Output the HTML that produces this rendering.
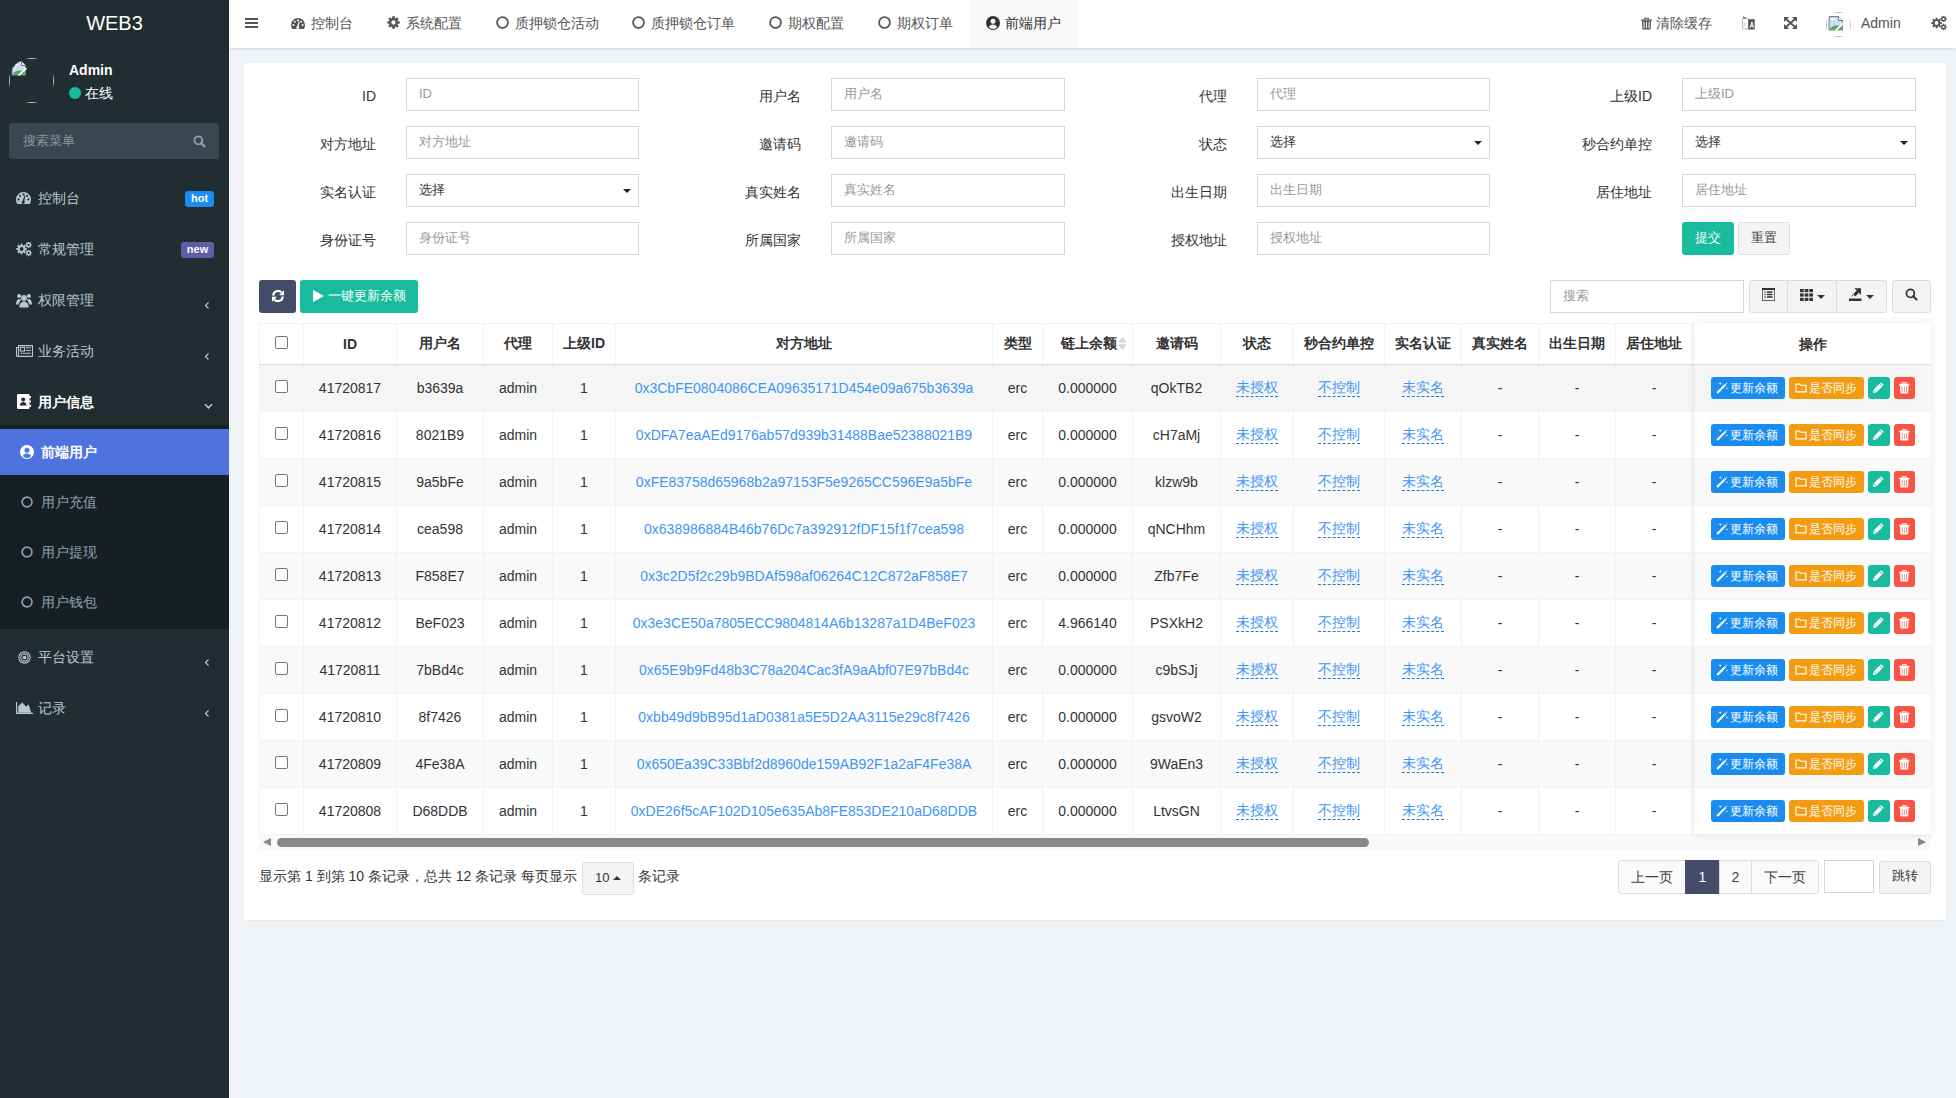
<!DOCTYPE html><html><head><meta charset="utf-8"><title>WEB3</title><style>
*{box-sizing:border-box;margin:0;padding:0}
html,body{width:1956px;height:1098px;overflow:hidden}
body{background:#f1f4f6;font-family:"Liberation Sans",sans-serif;font-size:14px;color:#333;position:relative}
svg{display:block}
#side{position:absolute;left:0;top:0;width:229px;height:1098px;background:#222d32}
.logo{position:absolute;left:0;top:0;width:229px;height:48px;line-height:46px;text-align:center;color:#fff;font-size:20px}
.avatar{position:absolute;left:9px;top:58px;width:45px;height:45px;border-radius:50%;overflow:hidden}
.avatar .sq,.havatar .sq{position:absolute;left:0;top:0;right:0;bottom:0;border:1px solid #c0c0c0}
.brokenimg{position:absolute;left:2px;top:2px}
.uname{position:absolute;left:69px;top:61px;color:#fff;font-weight:bold;font-size:14px;line-height:18px}
.online{position:absolute;left:69px;top:84px;color:#fff;font-size:14px;line-height:18px}
.online .dot{display:inline-block;width:12px;height:12px;border-radius:50%;background:#18bc9c;vertical-align:-1px;margin-right:4px}
.sbox{position:absolute;left:9px;top:123px;width:210px;height:36px;background:#374850;border-radius:3px}
.sbox .ph{position:absolute;left:14px;top:9px;color:#8c989e;font-size:13px;line-height:18px}
.sicon{position:absolute;left:184px;top:12px;color:#9aa5aa}
.mi{position:absolute;left:0;width:229px;height:24px;line-height:24px;color:#b8c7ce;font-size:14px}
.mi .micon{position:absolute;left:16px;top:6px}
.mi .mt{position:absolute;left:38px;top:0}
.mi.open{color:#fff;font-weight:bold}
.mi.sub{color:#8aa4af}
.mi.sub .subicon{position:absolute;left:21px;top:6px}
.mi.sub .mt{left:41px}
.mi.sub.act{color:#fff;font-weight:bold}
.mi.sub.act .subicon{left:20px;top:5px}
.badge{position:absolute;left:185px;width:29px;height:16px;border-radius:3px;color:#fff;font-size:11px;font-weight:bold;text-align:center;line-height:14px}
.badge.hot{background:#1d8cf0}
.badge.new{background:#605ca8;left:181px;width:33px}
.chev{position:absolute;left:204px;color:#b8c7ce}
.tree{position:absolute;left:0;top:425px;width:229px;height:204px;background:#181f22}
.active{position:absolute;left:0;top:429px;width:229px;height:46px;background:#4e73df}
#hdr{position:absolute;left:229px;top:0;width:1727px;height:48px;background:#fff;box-shadow:0 1px 3px rgba(0,0,0,.13)}
.hamb{position:absolute;left:16px;top:18px;color:#555}
.tabact{position:absolute;left:740px;top:0;width:109px;height:48px;background:#f9f9f9}
.tab{position:absolute;top:0;height:48px;line-height:46px;color:#555;font-size:14px;white-space:nowrap}
.tab .ticon{position:absolute;left:0;top:16px}
.tab span{position:absolute;left:19px;top:0}
.tab.act{color:#333}
.hr{position:absolute;top:0;height:48px;line-height:46px;color:#555;white-space:nowrap}
.hr .ticon{position:absolute;left:0;top:17px}
.hr span{position:absolute;left:15px}
.hicon{position:absolute;top:16px;color:#555}
.havatar{position:absolute;left:1597px;top:12px;width:25px;height:25px;border-radius:50%;overflow:hidden}
.hbroken{position:absolute;left:2px;top:3px}
.hadmin{position:absolute;left:1632px;top:0;line-height:46px;color:#555;font-size:14px}
#panel{position:absolute;left:244px;top:63px;width:1702px;height:857px;background:#fff;border-radius:3px;box-shadow:0 1px 1px rgba(0,0,0,.05)}
.flab{position:absolute;margin-right:-1px;height:33px;line-height:36px;color:#333;font-size:14px;white-space:nowrap}
.finp{position:absolute;width:233px;height:33px;border:1px solid #d2d6de;background:#fff}
.finp .ph{position:absolute;left:12px;top:0;line-height:30px;color:#999;font-size:13px}
.finp.sel span{position:absolute;left:12px;top:0;line-height:29px;color:#333;font-size:13px}
.caret{position:absolute;right:7px;top:14px;width:0;height:0;border-left:4px solid transparent;border-right:4px solid transparent;border-top:4px solid #222}
.btn{position:absolute;padding-bottom:2px;border-radius:3px;color:#fff;font-size:13px;text-align:center;line-height:32px;display:flex;align-items:center;justify-content:center;white-space:nowrap}
.bsucc{background:#18bc9c;color:#fff}
.bprim{background:#444c69;color:#fff}
.bdef{background:#f4f4f4;border:1px solid #ddd;color:#444}
.binfo{background:#1a8cf0}
.bwarn{background:#f39c12}
.bdang{background:#f75444}
.playicon{color:#fff}
.sinput{position:absolute;width:194px;height:33px;border:1px solid #d2d6de}
.sinput .ph{position:absolute;left:12px;top:0;line-height:30px;color:#999;font-size:13px}
.bgroup{position:absolute;width:137px;height:33px;border:1px solid #ddd;border-radius:3px;background:#f4f4f4;display:flex}
.gb{position:absolute;top:217px;height:33px;border:1px solid #ddd;background:#f4f4f4;display:flex;align-items:center;justify-content:center;color:#333;padding-bottom:3px}
.caret2{display:inline-block;width:0;height:0;border-left:4px solid transparent;border-right:4px solid transparent;border-top:4px solid #333;margin-left:4px;margin-top:4px}
.gb .gicon{margin-top:-1px}
.tblwrap{position:absolute;left:15px;top:260px;width:1672px;height:527px;overflow:hidden}
.tbl{position:absolute;left:0;top:0;border-collapse:collapse;table-layout:fixed;width:1777px}
.tbl th,.tbl td{border:1px solid #f2f2f2;text-align:center;white-space:nowrap;overflow:hidden}
.tbl th{height:41px;font-weight:bold;font-size:14px;color:#333;border-bottom:1px solid #ddd;position:relative}
.tbl td{height:47px;font-size:14px;color:#333}
.tbl tr.odd td{background:#f9f9f9}
.tbl tr.hov td{background:#f5f5f5}
.tbl a{color:#3f95f6}
.tbl u{color:#3f95f6;text-decoration:none;border-bottom:1px dashed #1c80c4;padding-bottom:1px}
.cb{display:inline-block;width:13px;height:13px;border:1px solid #767676;border-radius:2px;background:#fff;vertical-align:middle;position:relative;top:-3px}
.sort{display:inline-block;vertical-align:middle;position:relative;left:7px;top:-1px}
.fixcol{position:absolute;left:1451px;top:260px;width:236px;height:512px;background:#fff;box-shadow:0 0 8px rgba(0,0,0,.09)}
.fh{height:42px;line-height:41px;text-align:center;font-weight:bold;border-bottom:1px solid #ddd;border-top:1px solid #fff}
.fr{height:47px;display:flex;align-items:center;padding-left:16px;padding-top:0;border-bottom:1px solid #f2f2f2}
.fr.odd{background:#f9f9f9}
.fr.hov{background:#f5f5f5}
.ob{display:inline-flex;align-items:center;justify-content:center;height:22px;border-radius:3px;color:#fff;font-size:12px;margin-right:4px;padding:0;white-space:nowrap}
.ob .oicon{margin-right:2px;margin-left:-2px}
.ob.sq{width:22px;justify-content:center;padding:0}
.sbar{position:absolute;left:0;top:512px;width:1672px;height:15px;background:#f9f9f9}
.sbar .thumb{position:absolute;left:18px;top:3px;width:1092px;height:9px;border-radius:5px;background:#888}
.sbar .arl{position:absolute;left:4px;top:3px;width:0;height:0;border-top:4px solid transparent;border-bottom:4px solid transparent;border-right:8px solid #888}
.sbar .arr{position:absolute;right:5px;top:3px;width:0;height:0;border-top:4px solid transparent;border-bottom:4px solid transparent;border-left:8px solid #888}
.finfo{position:absolute;left:15px;top:799px;height:33px;line-height:29px;font-size:14px;color:#333;white-space:nowrap}
.psize{position:absolute;left:338px;top:799px;width:52px;font-size:13px;height:33px;border:1px solid #ddd;border-radius:3px;background:#f4f4f4;text-align:center;line-height:29px}
.caretup{display:inline-block;width:0;height:0;border-left:4px solid transparent;border-right:4px solid transparent;border-bottom:4px solid #333;vertical-align:2px}
.pager{position:absolute;left:1374px;top:797px;height:34px;display:flex;border-radius:3px}
.pager span{height:34px;border:1px solid #ddd;border-right:0;background:#fafafa;line-height:32px;text-align:center;color:#444;font-size:14px}
.pager span:first-child{border-radius:3px 0 0 3px}
.pager span:last-child{border-radius:0 3px 3px 0}
.pager .pact{background:#444c69;border-color:#444c69;color:#fff}
.jinput{position:absolute;left:1580px;top:797px;width:50px;height:33px;border:1px solid #d2d6de}
.jbtn{left:1635px;top:798px;width:52px;height:33px;color:#333;padding-bottom:3px}

</style></head><body>
<div id="side">
<div class="logo">WEB3</div>
<div class="avatar"><i class="sq"></i><svg class="brokenimg" width="16" height="16" viewBox="0 0 16 16" fill="currentColor"><path d="M1 1.5h9.5l4 4V15H1z" fill="#c9dcf6" stroke="#7a7a7a" stroke-width="1"/><ellipse cx="5" cy="4.6" rx="2" ry="1" fill="#fff"/><path d="M1.5 14.5C4 10 8.5 9.5 14 11.5v3H1.5z" fill="#4caf50"/><path d="M10.5 1.5v4h4" fill="#fff" stroke="#7a7a7a" stroke-width="1"/><path d="M7.5 15.5L15.5 8" stroke="#fff" stroke-width="1.6"/></svg></div>
<div class="uname">Admin</div><div class="online"><span class="dot"></span>在线</div>
<div class="sbox"><span class="ph">搜索菜单</span><svg class="sicon" width="13" height="13" viewBox="0 0 14 14" fill="currentColor"><circle cx="5.8" cy="5.8" r="4.3" fill="none" stroke="currentColor" stroke-width="1.9"/><path d="M8.8 8.8l3.6 3.6" stroke="currentColor" stroke-width="2.2" stroke-linecap="round"/></svg></div>
<div class="mi" style="top:186px"><svg class="micon" style="" width="15" height="12" viewBox="0 0 15 12" fill="currentColor"><path d="M7.5 0A7.5 7.5 0 0 0 0 7.5c0 1.6.5 3.1 1.3 4.4h12.4A7.5 7.5 0 0 0 15 7.5 7.5 7.5 0 0 0 7.5 0z"/><g fill="#222d32"><circle cx="2.6" cy="7.4" r="1.05"/><circle cx="4.1" cy="3.9" r="1.05"/><circle cx="7.5" cy="2.4" r="1.05"/><circle cx="10.9" cy="3.9" r="1.05"/><circle cx="12.4" cy="7.4" r="1.05"/><path d="M8.3 3.6l.9.3-.9 5.4a1.5 1.5 0 1 1-1.6-.4z"/></g></svg><span class="mt">控制台</span></div>
<span class="badge hot" style="top:191px">hot</span>
<div class="mi" style="top:237px"><svg class="micon" style="top:5px" width="16" height="16" viewBox="0 0 16 16" fill="currentColor"><path fill-rule="evenodd" d="M9.37 6.00L10.80 5.97L10.80 8.03L9.37 8.00L8.97 8.96L10.01 9.94L8.54 11.41L7.56 10.37L6.60 10.77L6.63 12.20L4.57 12.20L4.60 10.77L3.64 10.37L2.66 11.41L1.19 9.94L2.23 8.96L1.83 8.00L0.40 8.03L0.40 5.97L1.83 6.00L2.23 5.04L1.19 4.06L2.66 2.59L3.64 3.63L4.60 3.23L4.57 1.80L6.63 1.80L6.60 3.23L7.56 3.63L8.54 2.59L10.01 4.06L8.97 5.04ZM3.70 7.00a1.90 1.90 0 1 0 3.80 0a1.90 1.90 0 1 0 -3.80 0Z"/><path fill-rule="evenodd" d="M14.92 2.28L15.74 2.28L15.74 3.52L14.92 3.52L14.68 4.11L15.26 4.68L14.38 5.56L13.81 4.98L13.22 5.22L13.22 6.04L11.98 6.04L11.98 5.22L11.39 4.98L10.82 5.56L9.94 4.68L10.52 4.11L10.28 3.52L9.46 3.52L9.46 2.28L10.28 2.28L10.52 1.69L9.94 1.12L10.82 0.24L11.39 0.82L11.98 0.58L11.98 -0.24L13.22 -0.24L13.22 0.58L13.81 0.82L14.38 0.24L15.26 1.12L14.68 1.69ZM11.60 2.90a1.00 1.00 0 1 0 2.00 0a1.00 1.00 0 1 0 -2.00 0Z"/><path fill-rule="evenodd" d="M14.92 10.38L15.74 10.38L15.74 11.62L14.92 11.62L14.68 12.21L15.26 12.78L14.38 13.66L13.81 13.08L13.22 13.32L13.22 14.14L11.98 14.14L11.98 13.32L11.39 13.08L10.82 13.66L9.94 12.78L10.52 12.21L10.28 11.62L9.46 11.62L9.46 10.38L10.28 10.38L10.52 9.79L9.94 9.22L10.82 8.34L11.39 8.92L11.98 8.68L11.98 7.86L13.22 7.86L13.22 8.68L13.81 8.92L14.38 8.34L15.26 9.22L14.68 9.79ZM11.60 11.00a1.00 1.00 0 1 0 2.00 0a1.00 1.00 0 1 0 -2.00 0Z"/></svg><span class="mt">常规管理</span></div>
<span class="badge new" style="top:242px">new</span>
<div class="mi" style="top:288px"><svg class="micon" style="top:5px;left:16px" width="16" height="15" viewBox="0 0 16 15" fill="currentColor"><circle cx="8" cy="5" r="2.9"/><circle cx="3.1" cy="3" r="2.1"/><circle cx="12.9" cy="3" r="2.1"/><path d="M3.3 14.6c0-3.6 1.9-6.1 4.7-6.1s4.7 2.5 4.7 6.1z"/><path d="M0 11.5C0 8.4 1.2 6 3.2 6c.9 0 1.6.3 2.1.8C3.9 8 3 9.7 2.9 11.5z"/><path d="M16 11.5C16 8.4 14.8 6 12.8 6c-.9 0-1.6.3-2.1.8 1.4 1.2 2.3 2.9 2.4 4.7z"/></svg><span class="mt">权限管理</span></div>
<svg class="chev" style="top:301px" width="6" height="9" viewBox="0 0 8 10" fill="currentColor"><path d="M6 1L2 5l4 4" fill="none" stroke="currentColor" stroke-width="1.6"/></svg>
<div class="mi" style="top:339px"><svg class="micon" style="top:6px;left:16px" width="17" height="12" viewBox="0 0 17 12" fill="currentColor"><path d="M2.5 0.6h14v10.8H1.6A1.1 1.1 0 0 1 .5 10.3V2.5h2z" fill="none" stroke="currentColor" stroke-width="1.1"/><path d="M2.5 2.5v8.5" stroke="currentColor" stroke-width="1"/><rect x="4.3" y="2.3" width="4.2" height="3.8" fill="none" stroke="currentColor" stroke-width="1.1"/><path d="M9.8 2.8h5M9.8 5.5h5M4.3 8.2h10.5" stroke="currentColor" stroke-width="1.1"/></svg><span class="mt">业务活动</span></div>
<svg class="chev" style="top:352px" width="6" height="9" viewBox="0 0 8 10" fill="currentColor"><path d="M6 1L2 5l4 4" fill="none" stroke="currentColor" stroke-width="1.6"/></svg>
<div class="mi open" style="top:390px"><svg class="micon" style="top:4px;left:17px" width="14" height="15" viewBox="0 0 14 15" fill="currentColor"><rect x="0" y="0" width="12.5" height="15" rx="1.2" fill="#fff"/><g fill="#222d32"><circle cx="6.2" cy="5.6" r="2"/><path d="M2.8 11.6c0-2 1.5-3.5 3.4-3.5s3.4 1.5 3.4 3.5z"/></g><path d="M12.3 2h1.7v2.2h-1.7zM12.3 6.4h1.7v2.2h-1.7zM12.3 10.8h1.7V13h-1.7z" fill="#fff"/></svg><span class="mt">用户信息</span></div>
<svg class="chev" style="top:403px" width="9" height="7" viewBox="0 0 10 8" fill="currentColor"><path d="M1 1.5l4 4 4-4" fill="none" stroke="currentColor" stroke-width="1.8"/></svg>
<div class="tree"></div>
<div class="active"></div>
<div class="mi sub act" style="top:440px"><svg class="subicon" width="14" height="14" viewBox="0 0 14 14" fill="currentColor"><path fill-rule="evenodd" d="M7 0a7 7 0 1 0 0 14A7 7 0 0 0 7 0zM7 2.7a2.5 2.5 0 1 1 0 5 2.5 2.5 0 0 1 0-5zM2.7 11.1C3.5 9.5 5.1 8.6 7 8.6s3.5.9 4.3 2.5A5.8 5.8 0 0 1 7 13a5.8 5.8 0 0 1-4.3-1.9z"/></svg><span class="mt">前端用户</span></div>
<div class="mi sub" style="top:490px"><svg class="subicon" width="12" height="12" viewBox="0 0 12 12" fill="currentColor"><circle cx="6" cy="6" r="4.9" fill="none" stroke="currentColor" stroke-width="1.7"/></svg><span class="mt">用户充值</span></div>
<div class="mi sub" style="top:540px"><svg class="subicon" width="12" height="12" viewBox="0 0 12 12" fill="currentColor"><circle cx="6" cy="6" r="4.9" fill="none" stroke="currentColor" stroke-width="1.7"/></svg><span class="mt">用户提现</span></div>
<div class="mi sub" style="top:590px"><svg class="subicon" width="12" height="12" viewBox="0 0 12 12" fill="currentColor"><circle cx="6" cy="6" r="4.9" fill="none" stroke="currentColor" stroke-width="1.7"/></svg><span class="mt">用户钱包</span></div>
<div class="mi" style="top:645px"><svg class="micon" style="left:18px;top:6px" width="13" height="13" viewBox="0 0 14 14" fill="currentColor"><circle cx="7" cy="7" r="6.1" fill="none" stroke="currentColor" stroke-width="1.2"/><circle cx="7" cy="7" r="3.9" fill="none" stroke="currentColor" stroke-width="1.2"/><circle cx="7" cy="7" r="2"/></svg><span class="mt">平台设置</span></div>
<svg class="chev" style="top:658px" width="6" height="9" viewBox="0 0 8 10" fill="currentColor"><path d="M6 1L2 5l4 4" fill="none" stroke="currentColor" stroke-width="1.6"/></svg>
<div class="mi" style="top:696px"><svg class="micon" style="left:16px;top:6px" width="17" height="12" viewBox="0 0 17 12" fill="currentColor"><path d="M0.6 0v11.4H17" fill="none" stroke="currentColor" stroke-width="1.2"/><path d="M2.2 10.8V4.2L6.2 0.6 10 4.6 12.6 2.6 15.3 10.8z"/></svg><span class="mt">记录</span></div>
<svg class="chev" style="top:709px" width="6" height="9" viewBox="0 0 8 10" fill="currentColor"><path d="M6 1L2 5l4 4" fill="none" stroke="currentColor" stroke-width="1.6"/></svg>
</div>
<div id="hdr">
<svg class="hamb" width="13" height="10" viewBox="0 0 13 10" fill="currentColor"><rect y="0" width="13" height="2"/><rect y="4" width="13" height="2"/><rect y="8" width="13" height="2"/></svg>
<div class="tabact"></div>
<div class="tab" style="left:62px"><svg class="ticon" style="top:18px" width="14" height="11.2" viewBox="0 0 15 12" fill="currentColor"><path d="M7.5 0A7.5 7.5 0 0 0 0 7.5c0 1.6.5 3.1 1.3 4.4h12.4A7.5 7.5 0 0 0 15 7.5 7.5 7.5 0 0 0 7.5 0z"/><g fill="#fff"><circle cx="2.6" cy="7.4" r="1.05"/><circle cx="4.1" cy="3.9" r="1.05"/><circle cx="7.5" cy="2.4" r="1.05"/><circle cx="10.9" cy="3.9" r="1.05"/><circle cx="12.4" cy="7.4" r="1.05"/><path d="M8.3 3.6l.9.3-.9 5.4a1.5 1.5 0 1 1-1.6-.4z"/></g></svg><span style="left:20px">控制台</span></div>
<div class="tab" style="left:158px"><svg class="ticon" width="13" height="13" viewBox="0 0 14 14" fill="currentColor"><path fill-rule="evenodd" d="M11.81 5.62L13.64 5.54L13.64 8.46L11.81 8.38L11.37 9.43L12.73 10.67L10.67 12.73L9.43 11.37L8.38 11.81L8.46 13.64L5.54 13.64L5.62 11.81L4.57 11.37L3.33 12.73L1.27 10.67L2.63 9.43L2.19 8.38L0.36 8.46L0.36 5.54L2.19 5.62L2.63 4.57L1.27 3.33L3.33 1.27L4.57 2.63L5.62 2.19L5.54 0.36L8.46 0.36L8.38 2.19L9.43 2.63L10.67 1.27L12.73 3.33L11.37 4.57ZM4.70 7.00a2.30 2.30 0 1 0 4.60 0a2.30 2.30 0 1 0 -4.60 0Z"/></svg><span>系统配置</span></div>
<div class="tab" style="left:267px"><svg class="ticon" width="13" height="13" viewBox="0 0 13 13" fill="currentColor"><circle cx="6.5" cy="6.5" r="5.4" fill="none" stroke="currentColor" stroke-width="1.8"/></svg><span>质押锁仓活动</span></div>
<div class="tab" style="left:403px"><svg class="ticon" width="13" height="13" viewBox="0 0 13 13" fill="currentColor"><circle cx="6.5" cy="6.5" r="5.4" fill="none" stroke="currentColor" stroke-width="1.8"/></svg><span>质押锁仓订单</span></div>
<div class="tab" style="left:540px"><svg class="ticon" width="13" height="13" viewBox="0 0 13 13" fill="currentColor"><circle cx="6.5" cy="6.5" r="5.4" fill="none" stroke="currentColor" stroke-width="1.8"/></svg><span>期权配置</span></div>
<div class="tab" style="left:649px"><svg class="ticon" width="13" height="13" viewBox="0 0 13 13" fill="currentColor"><circle cx="6.5" cy="6.5" r="5.4" fill="none" stroke="currentColor" stroke-width="1.8"/></svg><span>期权订单</span></div>
<div class="tab act" style="left:757px"><svg class="ticon" width="14" height="14" viewBox="0 0 14 14" fill="currentColor"><path fill-rule="evenodd" d="M7 0a7 7 0 1 0 0 14A7 7 0 0 0 7 0zM7 2.7a2.5 2.5 0 1 1 0 5 2.5 2.5 0 0 1 0-5zM2.7 11.1C3.5 9.5 5.1 8.6 7 8.6s3.5.9 4.3 2.5A5.8 5.8 0 0 1 7 13a5.8 5.8 0 0 1-4.3-1.9z"/></svg><span>前端用户</span></div>
<div class="hr" style="left:1412px"><svg class="ticon" width="11" height="13" viewBox="0 0 12 13" fill="currentColor"><path d="M3.6 0.2h4.8l.6 1.9H7.8l-.4-.8H4.6l-.4.8H3z"/><rect x="0" y="2" width="12" height="1.4" rx=".3"/><path fill-rule="evenodd" d="M1 3.4h10l-.5 8.8a.8.8 0 0 1-.8.8H2.3a.8.8 0 0 1-.8-.8zM2.6 4.6l.3 7.2h1.1l-.2-7.2zM5.45 4.6v7.2h1.1V4.6zM8.3 4.6l-.2 7.2h1.1l.3-7.2z"/></svg><span>清除缓存</span></div>
<svg class="hicon" style="left:1513px" width="13" height="14" viewBox="0 0 13 14" fill="currentColor"><path d="M1 0.5l3.5 1.2v1H1z"/><rect x="0.5" y="2.8" width="6" height="10" fill="#fff" stroke="#bbb" stroke-width=".9"/><path d="M2 6.5l1.5 1.5L2 9.5" fill="none" stroke="#99a" stroke-width=".8"/><rect x="6.3" y="3.2" width="6.4" height="10.3"/><path d="M7.7 11.8l1.8-6h.8l1.8 6h-1.1l-.4-1.4H9.2l-.4 1.4zm1.8-2.3h1l-.5-1.8z" fill="#fff"/><path d="M3 14h5" stroke="#aab" stroke-width=".6"/></svg>
<svg class="hicon" style="left:1555px;top:17px" width="13" height="12" viewBox="0 0 13 12" fill="currentColor"><path d="M0 0h5L0 5zM13 0v5L8 0zM0 12V7l5 5zM13 12H8l5-5z"/><path d="M1.5 1.5L11.5 10.5M11.5 1.5L1.5 10.5" stroke="currentColor" stroke-width="1.8"/></svg>
<div class="havatar"><i class="sq"></i><svg class="hbroken" width="16" height="16" viewBox="0 0 16 16" fill="currentColor"><path d="M1 1.5h9.5l4 4V15H1z" fill="#c9dcf6" stroke="#7a7a7a" stroke-width="1"/><ellipse cx="5" cy="4.6" rx="2" ry="1" fill="#fff"/><path d="M1.5 14.5C4 10 8.5 9.5 14 11.5v3H1.5z" fill="#4caf50"/><path d="M10.5 1.5v4h4" fill="#fff" stroke="#7a7a7a" stroke-width="1"/><path d="M7.5 15.5L15.5 8" stroke="#fff" stroke-width="1.6"/></svg></div>
<div class="hadmin">Admin</div>
<svg class="hicon" style="left:1702px" width="16" height="16" viewBox="0 0 16 16" fill="currentColor"><path fill-rule="evenodd" d="M9.37 6.00L10.80 5.97L10.80 8.03L9.37 8.00L8.97 8.96L10.01 9.94L8.54 11.41L7.56 10.37L6.60 10.77L6.63 12.20L4.57 12.20L4.60 10.77L3.64 10.37L2.66 11.41L1.19 9.94L2.23 8.96L1.83 8.00L0.40 8.03L0.40 5.97L1.83 6.00L2.23 5.04L1.19 4.06L2.66 2.59L3.64 3.63L4.60 3.23L4.57 1.80L6.63 1.80L6.60 3.23L7.56 3.63L8.54 2.59L10.01 4.06L8.97 5.04ZM3.70 7.00a1.90 1.90 0 1 0 3.80 0a1.90 1.90 0 1 0 -3.80 0Z"/><path fill-rule="evenodd" d="M14.92 2.28L15.74 2.28L15.74 3.52L14.92 3.52L14.68 4.11L15.26 4.68L14.38 5.56L13.81 4.98L13.22 5.22L13.22 6.04L11.98 6.04L11.98 5.22L11.39 4.98L10.82 5.56L9.94 4.68L10.52 4.11L10.28 3.52L9.46 3.52L9.46 2.28L10.28 2.28L10.52 1.69L9.94 1.12L10.82 0.24L11.39 0.82L11.98 0.58L11.98 -0.24L13.22 -0.24L13.22 0.58L13.81 0.82L14.38 0.24L15.26 1.12L14.68 1.69ZM11.60 2.90a1.00 1.00 0 1 0 2.00 0a1.00 1.00 0 1 0 -2.00 0Z"/><path fill-rule="evenodd" d="M14.92 10.38L15.74 10.38L15.74 11.62L14.92 11.62L14.68 12.21L15.26 12.78L14.38 13.66L13.81 13.08L13.22 13.32L13.22 14.14L11.98 14.14L11.98 13.32L11.39 13.08L10.82 13.66L9.94 12.78L10.52 12.21L10.28 11.62L9.46 11.62L9.46 10.38L10.28 10.38L10.52 9.79L9.94 9.22L10.82 8.34L11.39 8.92L11.98 8.68L11.98 7.86L13.22 7.86L13.22 8.68L13.81 8.92L14.38 8.34L15.26 9.22L14.68 9.79ZM11.60 11.00a1.00 1.00 0 1 0 2.00 0a1.00 1.00 0 1 0 -2.00 0Z"/></svg>
</div>
<div id="panel">
<div class="flab" style="right:1571px;top:15px">ID</div>
<div class="finp" style="left:162px;top:15px;width:233px"><span class="ph">ID</span></div>
<div class="flab" style="right:1146px;top:15px">用户名</div>
<div class="finp" style="left:587px;top:15px;width:234px"><span class="ph">用户名</span></div>
<div class="flab" style="right:720px;top:15px">代理</div>
<div class="finp" style="left:1013px;top:15px;width:233px"><span class="ph">代理</span></div>
<div class="flab" style="right:295px;top:15px">上级ID</div>
<div class="finp" style="left:1438px;top:15px;width:234px"><span class="ph">上级ID</span></div>
<div class="flab" style="right:1571px;top:63px">对方地址</div>
<div class="finp" style="left:162px;top:63px;width:233px"><span class="ph">对方地址</span></div>
<div class="flab" style="right:1146px;top:63px">邀请码</div>
<div class="finp" style="left:587px;top:63px;width:234px"><span class="ph">邀请码</span></div>
<div class="flab" style="right:720px;top:63px">状态</div>
<div class="finp sel" style="left:1013px;top:63px;width:233px"><span>选择</span><b class="caret"></b></div>
<div class="flab" style="right:295px;top:63px">秒合约单控</div>
<div class="finp sel" style="left:1438px;top:63px;width:234px"><span>选择</span><b class="caret"></b></div>
<div class="flab" style="right:1571px;top:111px">实名认证</div>
<div class="finp sel" style="left:162px;top:111px;width:233px"><span>选择</span><b class="caret"></b></div>
<div class="flab" style="right:1146px;top:111px">真实姓名</div>
<div class="finp" style="left:587px;top:111px;width:234px"><span class="ph">真实姓名</span></div>
<div class="flab" style="right:720px;top:111px">出生日期</div>
<div class="finp" style="left:1013px;top:111px;width:233px"><span class="ph">出生日期</span></div>
<div class="flab" style="right:295px;top:111px">居住地址</div>
<div class="finp" style="left:1438px;top:111px;width:234px"><span class="ph">居住地址</span></div>
<div class="flab" style="right:1571px;top:159px">身份证号</div>
<div class="finp" style="left:162px;top:159px;width:233px"><span class="ph">身份证号</span></div>
<div class="flab" style="right:1146px;top:159px">所属国家</div>
<div class="finp" style="left:587px;top:159px;width:234px"><span class="ph">所属国家</span></div>
<div class="flab" style="right:720px;top:159px">授权地址</div>
<div class="finp" style="left:1013px;top:159px;width:233px"><span class="ph">授权地址</span></div>
<div class="btn bsucc" style="left:1438px;top:159px;width:52px;height:33px">提交</div>
<div class="btn bdef" style="left:1494px;top:159px;width:52px;height:33px">重置</div>
<div class="btn bprim" style="left:15px;top:217px;width:37px;height:33px"><svg class="bicon" width="12" height="12" viewBox="0 0 12 12" fill="currentColor"><path d="M0.20 5.60A5.80 5.80 0 0 1 10.44 1.87L8.76 3.29A3.60 3.60 0 0 0 2.40 5.60Z"/><path d="M12 0.3V5.2H7.1z"/><path d="M11.80 6.40A5.80 5.80 0 0 1 1.56 10.13L3.24 8.71A3.60 3.60 0 0 0 9.60 6.40Z"/><path d="M0 11.7V6.8h4.9z"/></svg></div>
<div class="btn bsucc" style="left:56px;top:217px;width:118px;height:33px"><svg class="playicon" width="11" height="12" viewBox="0 0 11 12" fill="currentColor"><path d="M0 0l11 6-11 6z"/></svg><span style="margin-left:4px">一键更新余额</span></div>
<div class="sinput" style="left:1306px;top:217px"><span class="ph">搜索</span></div>
<div class="gb" style="left:1505px;width:39px;border-radius:3px 0 0 3px"><svg class="gicon" width="13" height="13" viewBox="0 0 13 13" fill="currentColor"><path d="M0 0h13v13H0z" fill="none" stroke="currentColor" stroke-width="1.4"/><rect x="0" y="0" width="13" height="2"/><path d="M2.5 4h1.2M2.5 6.5h1.2M2.5 9h1.2M5 4h5.5M5 6.5h5.5M5 9h5.5" stroke="currentColor" stroke-width="1.3"/></svg></div>
<div class="gb" style="left:1544px;width:49px;border-left:0"><svg class="gicon" width="13" height="12" viewBox="0 0 13 12" fill="currentColor"><rect x="0" y="0" width="3.7" height="3.2"/><rect x="4.65" y="0" width="3.7" height="3.2"/><rect x="9.3" y="0" width="3.7" height="3.2"/><rect x="0" y="4.4" width="3.7" height="3.2"/><rect x="4.65" y="4.4" width="3.7" height="3.2"/><rect x="9.3" y="4.4" width="3.7" height="3.2"/><rect x="0" y="8.8" width="3.7" height="3.2"/><rect x="4.65" y="8.8" width="3.7" height="3.2"/><rect x="9.3" y="8.8" width="3.7" height="3.2"/></svg><b class="caret2"></b></div>
<div class="gb" style="left:1593px;width:50px;border-left:0;border-radius:0 3px 3px 0"><svg class="gicon" width="13" height="13" viewBox="0 0 13 13" fill="currentColor"><rect x="0" y="10.5" width="12.5" height="2.5"/><path d="M5.3 0.2H12v6.7L9.9 4.8 6.3 8.4 4.1 6.2l3.6-3.6z"/><path d="M4 6.8L2.6 8.2" stroke="currentColor" stroke-width="1"/></svg><b class="caret2"></b></div>
<div class="gb" style="left:1648px;width:39px;border-radius:3px"><svg class="gicon" width="13" height="13" viewBox="0 0 14 14" fill="currentColor"><circle cx="5.8" cy="5.8" r="4.3" fill="none" stroke="currentColor" stroke-width="1.9"/><path d="M8.8 8.8l3.6 3.6" stroke="currentColor" stroke-width="2.2" stroke-linecap="round"/></svg></div>
<div class="tblwrap">
<table class="tbl" style="width:1733px"><colgroup><col style="width:44px"><col style="width:93px"><col style="width:87px"><col style="width:69px"><col style="width:63px"><col style="width:377px"><col style="width:50px"><col style="width:90px"><col style="width:88px"><col style="width:73px"><col style="width:91px"><col style="width:77px"><col style="width:77px"><col style="width:77px"><col style="width:77px"><col style="width:300px"></colgroup>
<thead><tr><th><i class="cb"></i></th><th>ID</th><th>用户名</th><th>代理</th><th>上级ID</th><th>对方地址</th><th>类型</th><th><span style="position:relative;left:6px">链上余额</span><svg class="sort" width="9" height="15" viewBox="0 0 9 15"><path d="M4.5 0.5L8.5 6.8H0.5z" fill="#d6d6d6"/><path d="M4.5 14.5L8.5 8.2H0.5z" fill="#d6d6d6"/></svg></th><th>邀请码</th><th>状态</th><th>秒合约单控</th><th>实名认证</th><th>真实姓名</th><th>出生日期</th><th>居住地址</th><th></th></tr></thead><tbody>
<tr class="hov"><td><i class="cb"></i></td><td>41720817</td><td>b3639a</td><td>admin</td><td>1</td><td><a>0x3CbFE0804086CEA09635171D454e09a675b3639a</a></td><td>erc</td><td>0.000000</td><td>qOkTB2</td><td><u>未授权</u></td><td><u>不控制</u></td><td><u>未实名</u></td><td>-</td><td>-</td><td>-</td><td></td></tr>
<tr class=""><td><i class="cb"></i></td><td>41720816</td><td>8021B9</td><td>admin</td><td>1</td><td><a>0xDFA7eaAEd9176ab57d939b31488Bae52388021B9</a></td><td>erc</td><td>0.000000</td><td>cH7aMj</td><td><u>未授权</u></td><td><u>不控制</u></td><td><u>未实名</u></td><td>-</td><td>-</td><td>-</td><td></td></tr>
<tr class="odd"><td><i class="cb"></i></td><td>41720815</td><td>9a5bFe</td><td>admin</td><td>1</td><td><a>0xFE83758d65968b2a97153F5e9265CC596E9a5bFe</a></td><td>erc</td><td>0.000000</td><td>klzw9b</td><td><u>未授权</u></td><td><u>不控制</u></td><td><u>未实名</u></td><td>-</td><td>-</td><td>-</td><td></td></tr>
<tr class=""><td><i class="cb"></i></td><td>41720814</td><td>cea598</td><td>admin</td><td>1</td><td><a>0x638986884B46b76Dc7a392912fDF15f1f7cea598</a></td><td>erc</td><td>0.000000</td><td>qNCHhm</td><td><u>未授权</u></td><td><u>不控制</u></td><td><u>未实名</u></td><td>-</td><td>-</td><td>-</td><td></td></tr>
<tr class="odd"><td><i class="cb"></i></td><td>41720813</td><td>F858E7</td><td>admin</td><td>1</td><td><a>0x3c2D5f2c29b9BDAf598af06264C12C872aF858E7</a></td><td>erc</td><td>0.000000</td><td>Zfb7Fe</td><td><u>未授权</u></td><td><u>不控制</u></td><td><u>未实名</u></td><td>-</td><td>-</td><td>-</td><td></td></tr>
<tr class=""><td><i class="cb"></i></td><td>41720812</td><td>BeF023</td><td>admin</td><td>1</td><td><a>0x3e3CE50a7805ECC9804814A6b13287a1D4BeF023</a></td><td>erc</td><td>4.966140</td><td>PSXkH2</td><td><u>未授权</u></td><td><u>不控制</u></td><td><u>未实名</u></td><td>-</td><td>-</td><td>-</td><td></td></tr>
<tr class="odd"><td><i class="cb"></i></td><td>41720811</td><td>7bBd4c</td><td>admin</td><td>1</td><td><a>0x65E9b9Fd48b3C78a204Cac3fA9aAbf07E97bBd4c</a></td><td>erc</td><td>0.000000</td><td>c9bSJj</td><td><u>未授权</u></td><td><u>不控制</u></td><td><u>未实名</u></td><td>-</td><td>-</td><td>-</td><td></td></tr>
<tr class=""><td><i class="cb"></i></td><td>41720810</td><td>8f7426</td><td>admin</td><td>1</td><td><a>0xbb49d9bB95d1aD0381a5E5D2AA3115e29c8f7426</a></td><td>erc</td><td>0.000000</td><td>gsvoW2</td><td><u>未授权</u></td><td><u>不控制</u></td><td><u>未实名</u></td><td>-</td><td>-</td><td>-</td><td></td></tr>
<tr class="odd"><td><i class="cb"></i></td><td>41720809</td><td>4Fe38A</td><td>admin</td><td>1</td><td><a>0x650Ea39C33Bbf2d8960de159AB92F1a2aF4Fe38A</a></td><td>erc</td><td>0.000000</td><td>9WaEn3</td><td><u>未授权</u></td><td><u>不控制</u></td><td><u>未实名</u></td><td>-</td><td>-</td><td>-</td><td></td></tr>
<tr class=""><td><i class="cb"></i></td><td>41720808</td><td>D68DDB</td><td>admin</td><td>1</td><td><a>0xDE26f5cAF102D105e635Ab8FE853DE210aD68DDB</a></td><td>erc</td><td>0.000000</td><td>LtvsGN</td><td><u>未授权</u></td><td><u>不控制</u></td><td><u>未实名</u></td><td>-</td><td>-</td><td>-</td><td></td></tr>
</tbody></table>
<div class="sbar"><i class="arl"></i><i class="thumb"></i><i class="arr"></i></div>
</div>
<div class="fixcol"><div class="fh">操作</div>
<div class="fr hov"><span class="ob binfo" style="width:74px"><svg class="oicon" width="12" height="12" viewBox="0 0 12 12" fill="currentColor"><path d="M0.4 10.2L7.6 3l1.5 1.5-7.2 7.2z"/><path d="M7.9 2.7l1-1 1.5 1.5-1 1z"/><path d="M4.2 0l.4 1.1 1.1.4-1.1.4-.4 1.1-.4-1.1-1.1-.4 1.1-.4zM10.6 0.2l.3.8.8.3-.8.3-.3.8-.3-.8-.8-.3.8-.3zM10.9 5.3l.3.8.8.3-.8.3-.3.8-.3-.8-.8-.3.8-.3z"/></svg>更新余额</span><span class="ob bwarn" style="width:75px"><svg class="oicon" width="12" height="10" viewBox="0 0 13 11" fill="currentColor"><path d="M1 1.2h3.8l1.2 1.3h6v7.3H1z" fill="none" stroke="currentColor" stroke-width="1.3"/></svg>是否同步</span><span class="ob bsucc sq"><svg style="margin:-2px 0 0 -1px" class="oicon2" width="11" height="11" viewBox="0 0 12 12" fill="currentColor"><path d="M8.7 0.3l3 3-1.1 1.1-3-3z"/><path d="M7 2l3 3-6.2 6.2-3-3z"/><path d="M0.5 8.4l3.1 3.1-3.4.5z"/></svg></span><span class="ob bdang sq" style="width:21px"><svg class="oicon2" width="10.5" height="11.5" viewBox="0 0 12 13" fill="currentColor"><path d="M3.6 0.2h4.8l.6 1.9H7.8l-.4-.8H4.6l-.4.8H3z"/><rect x="0" y="2" width="12" height="1.4" rx=".3"/><path fill-rule="evenodd" d="M1 3.4h10l-.5 8.8a.8.8 0 0 1-.8.8H2.3a.8.8 0 0 1-.8-.8zM3.1 4.8l.2 6.8h.7l-.1-6.8zM5.65 4.8v6.8h.7V4.8zM8.2 4.8l-.1 6.8h.7l.2-6.8z"/></svg></span></div>
<div class="fr "><span class="ob binfo" style="width:74px"><svg class="oicon" width="12" height="12" viewBox="0 0 12 12" fill="currentColor"><path d="M0.4 10.2L7.6 3l1.5 1.5-7.2 7.2z"/><path d="M7.9 2.7l1-1 1.5 1.5-1 1z"/><path d="M4.2 0l.4 1.1 1.1.4-1.1.4-.4 1.1-.4-1.1-1.1-.4 1.1-.4zM10.6 0.2l.3.8.8.3-.8.3-.3.8-.3-.8-.8-.3.8-.3zM10.9 5.3l.3.8.8.3-.8.3-.3.8-.3-.8-.8-.3.8-.3z"/></svg>更新余额</span><span class="ob bwarn" style="width:75px"><svg class="oicon" width="12" height="10" viewBox="0 0 13 11" fill="currentColor"><path d="M1 1.2h3.8l1.2 1.3h6v7.3H1z" fill="none" stroke="currentColor" stroke-width="1.3"/></svg>是否同步</span><span class="ob bsucc sq"><svg style="margin:-2px 0 0 -1px" class="oicon2" width="11" height="11" viewBox="0 0 12 12" fill="currentColor"><path d="M8.7 0.3l3 3-1.1 1.1-3-3z"/><path d="M7 2l3 3-6.2 6.2-3-3z"/><path d="M0.5 8.4l3.1 3.1-3.4.5z"/></svg></span><span class="ob bdang sq" style="width:21px"><svg class="oicon2" width="10.5" height="11.5" viewBox="0 0 12 13" fill="currentColor"><path d="M3.6 0.2h4.8l.6 1.9H7.8l-.4-.8H4.6l-.4.8H3z"/><rect x="0" y="2" width="12" height="1.4" rx=".3"/><path fill-rule="evenodd" d="M1 3.4h10l-.5 8.8a.8.8 0 0 1-.8.8H2.3a.8.8 0 0 1-.8-.8zM3.1 4.8l.2 6.8h.7l-.1-6.8zM5.65 4.8v6.8h.7V4.8zM8.2 4.8l-.1 6.8h.7l.2-6.8z"/></svg></span></div>
<div class="fr odd"><span class="ob binfo" style="width:74px"><svg class="oicon" width="12" height="12" viewBox="0 0 12 12" fill="currentColor"><path d="M0.4 10.2L7.6 3l1.5 1.5-7.2 7.2z"/><path d="M7.9 2.7l1-1 1.5 1.5-1 1z"/><path d="M4.2 0l.4 1.1 1.1.4-1.1.4-.4 1.1-.4-1.1-1.1-.4 1.1-.4zM10.6 0.2l.3.8.8.3-.8.3-.3.8-.3-.8-.8-.3.8-.3zM10.9 5.3l.3.8.8.3-.8.3-.3.8-.3-.8-.8-.3.8-.3z"/></svg>更新余额</span><span class="ob bwarn" style="width:75px"><svg class="oicon" width="12" height="10" viewBox="0 0 13 11" fill="currentColor"><path d="M1 1.2h3.8l1.2 1.3h6v7.3H1z" fill="none" stroke="currentColor" stroke-width="1.3"/></svg>是否同步</span><span class="ob bsucc sq"><svg style="margin:-2px 0 0 -1px" class="oicon2" width="11" height="11" viewBox="0 0 12 12" fill="currentColor"><path d="M8.7 0.3l3 3-1.1 1.1-3-3z"/><path d="M7 2l3 3-6.2 6.2-3-3z"/><path d="M0.5 8.4l3.1 3.1-3.4.5z"/></svg></span><span class="ob bdang sq" style="width:21px"><svg class="oicon2" width="10.5" height="11.5" viewBox="0 0 12 13" fill="currentColor"><path d="M3.6 0.2h4.8l.6 1.9H7.8l-.4-.8H4.6l-.4.8H3z"/><rect x="0" y="2" width="12" height="1.4" rx=".3"/><path fill-rule="evenodd" d="M1 3.4h10l-.5 8.8a.8.8 0 0 1-.8.8H2.3a.8.8 0 0 1-.8-.8zM3.1 4.8l.2 6.8h.7l-.1-6.8zM5.65 4.8v6.8h.7V4.8zM8.2 4.8l-.1 6.8h.7l.2-6.8z"/></svg></span></div>
<div class="fr "><span class="ob binfo" style="width:74px"><svg class="oicon" width="12" height="12" viewBox="0 0 12 12" fill="currentColor"><path d="M0.4 10.2L7.6 3l1.5 1.5-7.2 7.2z"/><path d="M7.9 2.7l1-1 1.5 1.5-1 1z"/><path d="M4.2 0l.4 1.1 1.1.4-1.1.4-.4 1.1-.4-1.1-1.1-.4 1.1-.4zM10.6 0.2l.3.8.8.3-.8.3-.3.8-.3-.8-.8-.3.8-.3zM10.9 5.3l.3.8.8.3-.8.3-.3.8-.3-.8-.8-.3.8-.3z"/></svg>更新余额</span><span class="ob bwarn" style="width:75px"><svg class="oicon" width="12" height="10" viewBox="0 0 13 11" fill="currentColor"><path d="M1 1.2h3.8l1.2 1.3h6v7.3H1z" fill="none" stroke="currentColor" stroke-width="1.3"/></svg>是否同步</span><span class="ob bsucc sq"><svg style="margin:-2px 0 0 -1px" class="oicon2" width="11" height="11" viewBox="0 0 12 12" fill="currentColor"><path d="M8.7 0.3l3 3-1.1 1.1-3-3z"/><path d="M7 2l3 3-6.2 6.2-3-3z"/><path d="M0.5 8.4l3.1 3.1-3.4.5z"/></svg></span><span class="ob bdang sq" style="width:21px"><svg class="oicon2" width="10.5" height="11.5" viewBox="0 0 12 13" fill="currentColor"><path d="M3.6 0.2h4.8l.6 1.9H7.8l-.4-.8H4.6l-.4.8H3z"/><rect x="0" y="2" width="12" height="1.4" rx=".3"/><path fill-rule="evenodd" d="M1 3.4h10l-.5 8.8a.8.8 0 0 1-.8.8H2.3a.8.8 0 0 1-.8-.8zM3.1 4.8l.2 6.8h.7l-.1-6.8zM5.65 4.8v6.8h.7V4.8zM8.2 4.8l-.1 6.8h.7l.2-6.8z"/></svg></span></div>
<div class="fr odd"><span class="ob binfo" style="width:74px"><svg class="oicon" width="12" height="12" viewBox="0 0 12 12" fill="currentColor"><path d="M0.4 10.2L7.6 3l1.5 1.5-7.2 7.2z"/><path d="M7.9 2.7l1-1 1.5 1.5-1 1z"/><path d="M4.2 0l.4 1.1 1.1.4-1.1.4-.4 1.1-.4-1.1-1.1-.4 1.1-.4zM10.6 0.2l.3.8.8.3-.8.3-.3.8-.3-.8-.8-.3.8-.3zM10.9 5.3l.3.8.8.3-.8.3-.3.8-.3-.8-.8-.3.8-.3z"/></svg>更新余额</span><span class="ob bwarn" style="width:75px"><svg class="oicon" width="12" height="10" viewBox="0 0 13 11" fill="currentColor"><path d="M1 1.2h3.8l1.2 1.3h6v7.3H1z" fill="none" stroke="currentColor" stroke-width="1.3"/></svg>是否同步</span><span class="ob bsucc sq"><svg style="margin:-2px 0 0 -1px" class="oicon2" width="11" height="11" viewBox="0 0 12 12" fill="currentColor"><path d="M8.7 0.3l3 3-1.1 1.1-3-3z"/><path d="M7 2l3 3-6.2 6.2-3-3z"/><path d="M0.5 8.4l3.1 3.1-3.4.5z"/></svg></span><span class="ob bdang sq" style="width:21px"><svg class="oicon2" width="10.5" height="11.5" viewBox="0 0 12 13" fill="currentColor"><path d="M3.6 0.2h4.8l.6 1.9H7.8l-.4-.8H4.6l-.4.8H3z"/><rect x="0" y="2" width="12" height="1.4" rx=".3"/><path fill-rule="evenodd" d="M1 3.4h10l-.5 8.8a.8.8 0 0 1-.8.8H2.3a.8.8 0 0 1-.8-.8zM3.1 4.8l.2 6.8h.7l-.1-6.8zM5.65 4.8v6.8h.7V4.8zM8.2 4.8l-.1 6.8h.7l.2-6.8z"/></svg></span></div>
<div class="fr "><span class="ob binfo" style="width:74px"><svg class="oicon" width="12" height="12" viewBox="0 0 12 12" fill="currentColor"><path d="M0.4 10.2L7.6 3l1.5 1.5-7.2 7.2z"/><path d="M7.9 2.7l1-1 1.5 1.5-1 1z"/><path d="M4.2 0l.4 1.1 1.1.4-1.1.4-.4 1.1-.4-1.1-1.1-.4 1.1-.4zM10.6 0.2l.3.8.8.3-.8.3-.3.8-.3-.8-.8-.3.8-.3zM10.9 5.3l.3.8.8.3-.8.3-.3.8-.3-.8-.8-.3.8-.3z"/></svg>更新余额</span><span class="ob bwarn" style="width:75px"><svg class="oicon" width="12" height="10" viewBox="0 0 13 11" fill="currentColor"><path d="M1 1.2h3.8l1.2 1.3h6v7.3H1z" fill="none" stroke="currentColor" stroke-width="1.3"/></svg>是否同步</span><span class="ob bsucc sq"><svg style="margin:-2px 0 0 -1px" class="oicon2" width="11" height="11" viewBox="0 0 12 12" fill="currentColor"><path d="M8.7 0.3l3 3-1.1 1.1-3-3z"/><path d="M7 2l3 3-6.2 6.2-3-3z"/><path d="M0.5 8.4l3.1 3.1-3.4.5z"/></svg></span><span class="ob bdang sq" style="width:21px"><svg class="oicon2" width="10.5" height="11.5" viewBox="0 0 12 13" fill="currentColor"><path d="M3.6 0.2h4.8l.6 1.9H7.8l-.4-.8H4.6l-.4.8H3z"/><rect x="0" y="2" width="12" height="1.4" rx=".3"/><path fill-rule="evenodd" d="M1 3.4h10l-.5 8.8a.8.8 0 0 1-.8.8H2.3a.8.8 0 0 1-.8-.8zM3.1 4.8l.2 6.8h.7l-.1-6.8zM5.65 4.8v6.8h.7V4.8zM8.2 4.8l-.1 6.8h.7l.2-6.8z"/></svg></span></div>
<div class="fr odd"><span class="ob binfo" style="width:74px"><svg class="oicon" width="12" height="12" viewBox="0 0 12 12" fill="currentColor"><path d="M0.4 10.2L7.6 3l1.5 1.5-7.2 7.2z"/><path d="M7.9 2.7l1-1 1.5 1.5-1 1z"/><path d="M4.2 0l.4 1.1 1.1.4-1.1.4-.4 1.1-.4-1.1-1.1-.4 1.1-.4zM10.6 0.2l.3.8.8.3-.8.3-.3.8-.3-.8-.8-.3.8-.3zM10.9 5.3l.3.8.8.3-.8.3-.3.8-.3-.8-.8-.3.8-.3z"/></svg>更新余额</span><span class="ob bwarn" style="width:75px"><svg class="oicon" width="12" height="10" viewBox="0 0 13 11" fill="currentColor"><path d="M1 1.2h3.8l1.2 1.3h6v7.3H1z" fill="none" stroke="currentColor" stroke-width="1.3"/></svg>是否同步</span><span class="ob bsucc sq"><svg style="margin:-2px 0 0 -1px" class="oicon2" width="11" height="11" viewBox="0 0 12 12" fill="currentColor"><path d="M8.7 0.3l3 3-1.1 1.1-3-3z"/><path d="M7 2l3 3-6.2 6.2-3-3z"/><path d="M0.5 8.4l3.1 3.1-3.4.5z"/></svg></span><span class="ob bdang sq" style="width:21px"><svg class="oicon2" width="10.5" height="11.5" viewBox="0 0 12 13" fill="currentColor"><path d="M3.6 0.2h4.8l.6 1.9H7.8l-.4-.8H4.6l-.4.8H3z"/><rect x="0" y="2" width="12" height="1.4" rx=".3"/><path fill-rule="evenodd" d="M1 3.4h10l-.5 8.8a.8.8 0 0 1-.8.8H2.3a.8.8 0 0 1-.8-.8zM3.1 4.8l.2 6.8h.7l-.1-6.8zM5.65 4.8v6.8h.7V4.8zM8.2 4.8l-.1 6.8h.7l.2-6.8z"/></svg></span></div>
<div class="fr "><span class="ob binfo" style="width:74px"><svg class="oicon" width="12" height="12" viewBox="0 0 12 12" fill="currentColor"><path d="M0.4 10.2L7.6 3l1.5 1.5-7.2 7.2z"/><path d="M7.9 2.7l1-1 1.5 1.5-1 1z"/><path d="M4.2 0l.4 1.1 1.1.4-1.1.4-.4 1.1-.4-1.1-1.1-.4 1.1-.4zM10.6 0.2l.3.8.8.3-.8.3-.3.8-.3-.8-.8-.3.8-.3zM10.9 5.3l.3.8.8.3-.8.3-.3.8-.3-.8-.8-.3.8-.3z"/></svg>更新余额</span><span class="ob bwarn" style="width:75px"><svg class="oicon" width="12" height="10" viewBox="0 0 13 11" fill="currentColor"><path d="M1 1.2h3.8l1.2 1.3h6v7.3H1z" fill="none" stroke="currentColor" stroke-width="1.3"/></svg>是否同步</span><span class="ob bsucc sq"><svg style="margin:-2px 0 0 -1px" class="oicon2" width="11" height="11" viewBox="0 0 12 12" fill="currentColor"><path d="M8.7 0.3l3 3-1.1 1.1-3-3z"/><path d="M7 2l3 3-6.2 6.2-3-3z"/><path d="M0.5 8.4l3.1 3.1-3.4.5z"/></svg></span><span class="ob bdang sq" style="width:21px"><svg class="oicon2" width="10.5" height="11.5" viewBox="0 0 12 13" fill="currentColor"><path d="M3.6 0.2h4.8l.6 1.9H7.8l-.4-.8H4.6l-.4.8H3z"/><rect x="0" y="2" width="12" height="1.4" rx=".3"/><path fill-rule="evenodd" d="M1 3.4h10l-.5 8.8a.8.8 0 0 1-.8.8H2.3a.8.8 0 0 1-.8-.8zM3.1 4.8l.2 6.8h.7l-.1-6.8zM5.65 4.8v6.8h.7V4.8zM8.2 4.8l-.1 6.8h.7l.2-6.8z"/></svg></span></div>
<div class="fr odd"><span class="ob binfo" style="width:74px"><svg class="oicon" width="12" height="12" viewBox="0 0 12 12" fill="currentColor"><path d="M0.4 10.2L7.6 3l1.5 1.5-7.2 7.2z"/><path d="M7.9 2.7l1-1 1.5 1.5-1 1z"/><path d="M4.2 0l.4 1.1 1.1.4-1.1.4-.4 1.1-.4-1.1-1.1-.4 1.1-.4zM10.6 0.2l.3.8.8.3-.8.3-.3.8-.3-.8-.8-.3.8-.3zM10.9 5.3l.3.8.8.3-.8.3-.3.8-.3-.8-.8-.3.8-.3z"/></svg>更新余额</span><span class="ob bwarn" style="width:75px"><svg class="oicon" width="12" height="10" viewBox="0 0 13 11" fill="currentColor"><path d="M1 1.2h3.8l1.2 1.3h6v7.3H1z" fill="none" stroke="currentColor" stroke-width="1.3"/></svg>是否同步</span><span class="ob bsucc sq"><svg style="margin:-2px 0 0 -1px" class="oicon2" width="11" height="11" viewBox="0 0 12 12" fill="currentColor"><path d="M8.7 0.3l3 3-1.1 1.1-3-3z"/><path d="M7 2l3 3-6.2 6.2-3-3z"/><path d="M0.5 8.4l3.1 3.1-3.4.5z"/></svg></span><span class="ob bdang sq" style="width:21px"><svg class="oicon2" width="10.5" height="11.5" viewBox="0 0 12 13" fill="currentColor"><path d="M3.6 0.2h4.8l.6 1.9H7.8l-.4-.8H4.6l-.4.8H3z"/><rect x="0" y="2" width="12" height="1.4" rx=".3"/><path fill-rule="evenodd" d="M1 3.4h10l-.5 8.8a.8.8 0 0 1-.8.8H2.3a.8.8 0 0 1-.8-.8zM3.1 4.8l.2 6.8h.7l-.1-6.8zM5.65 4.8v6.8h.7V4.8zM8.2 4.8l-.1 6.8h.7l.2-6.8z"/></svg></span></div>
<div class="fr "><span class="ob binfo" style="width:74px"><svg class="oicon" width="12" height="12" viewBox="0 0 12 12" fill="currentColor"><path d="M0.4 10.2L7.6 3l1.5 1.5-7.2 7.2z"/><path d="M7.9 2.7l1-1 1.5 1.5-1 1z"/><path d="M4.2 0l.4 1.1 1.1.4-1.1.4-.4 1.1-.4-1.1-1.1-.4 1.1-.4zM10.6 0.2l.3.8.8.3-.8.3-.3.8-.3-.8-.8-.3.8-.3zM10.9 5.3l.3.8.8.3-.8.3-.3.8-.3-.8-.8-.3.8-.3z"/></svg>更新余额</span><span class="ob bwarn" style="width:75px"><svg class="oicon" width="12" height="10" viewBox="0 0 13 11" fill="currentColor"><path d="M1 1.2h3.8l1.2 1.3h6v7.3H1z" fill="none" stroke="currentColor" stroke-width="1.3"/></svg>是否同步</span><span class="ob bsucc sq"><svg style="margin:-2px 0 0 -1px" class="oicon2" width="11" height="11" viewBox="0 0 12 12" fill="currentColor"><path d="M8.7 0.3l3 3-1.1 1.1-3-3z"/><path d="M7 2l3 3-6.2 6.2-3-3z"/><path d="M0.5 8.4l3.1 3.1-3.4.5z"/></svg></span><span class="ob bdang sq" style="width:21px"><svg class="oicon2" width="10.5" height="11.5" viewBox="0 0 12 13" fill="currentColor"><path d="M3.6 0.2h4.8l.6 1.9H7.8l-.4-.8H4.6l-.4.8H3z"/><rect x="0" y="2" width="12" height="1.4" rx=".3"/><path fill-rule="evenodd" d="M1 3.4h10l-.5 8.8a.8.8 0 0 1-.8.8H2.3a.8.8 0 0 1-.8-.8zM3.1 4.8l.2 6.8h.7l-.1-6.8zM5.65 4.8v6.8h.7V4.8zM8.2 4.8l-.1 6.8h.7l.2-6.8z"/></svg></span></div>
</div>
<div class="finfo">显示第 1 到第 10 条记录，总共 12 条记录 每页显示</div><span class="psize">10 <b class="caretup"></b></span><div class="finfo" style="left:394px">条记录</div>
<div class="pager"><span style="width:67px">上一页</span><span class="pact" style="width:34px">1</span><span style="width:32px">2</span><span style="width:68px;border-right:1px solid #ddd">下一页</span></div>
<div class="jinput"></div><div class="btn bdef jbtn">跳转</div>
</div>
</body></html>
